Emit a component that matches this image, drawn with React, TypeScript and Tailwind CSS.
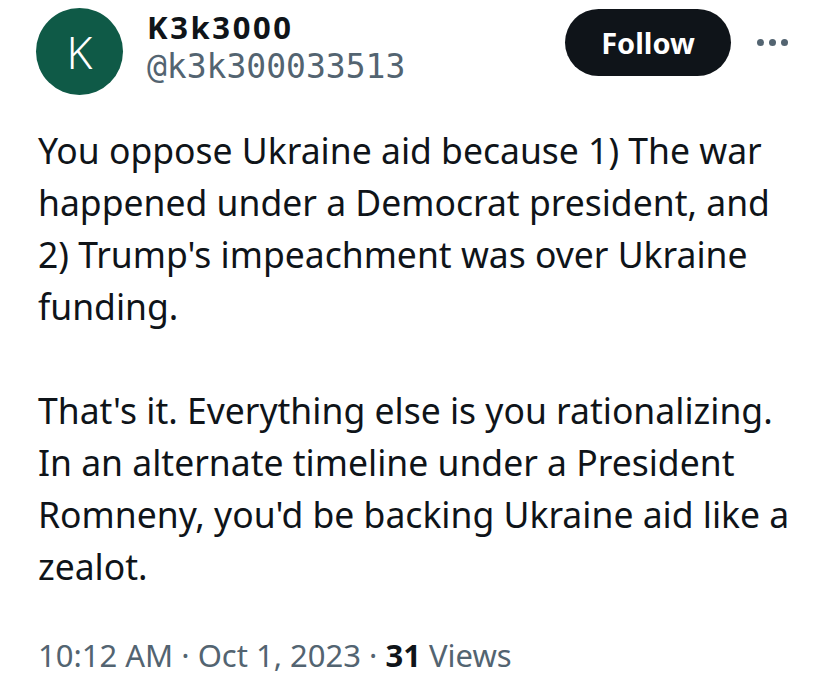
import React from "react";

export default function App() {
  return (
    <div
      className="w-[828px] h-[695px] bg-white text-[#0f1419] overflow-hidden"
      style={{ fontFamily: "'Noto Sans', Roboto, sans-serif" }}
    >
      <div className="flex items-center pl-[36px] pr-[40px] pt-[8px]">
        <div className="w-[87px] h-[87px] rounded-full bg-[#0f5a47] flex items-center justify-center text-white text-[44px] font-light leading-none">
          K
        </div>
        <div className="ml-[24px] flex flex-col -mt-[10px]">
          <span className="text-[31px] font-bold leading-[40px] tracking-[2.6px]">
            K3k3000
          </span>
          <span className="text-[33px] text-[#536471] leading-[40px] font-['DejaVu_Sans_Mono',monospace]">
            @k3k300033513
          </span>
        </div>
        <div className="ml-auto flex items-center -mt-[18px]">
          <button className="h-[67px] w-[166px] rounded-full bg-[#0f1419] text-white text-[29px] font-bold">
            Follow
          </button>
          <div className="ml-[26px] flex gap-[5px]">
            <span className="w-[7px] h-[7px] rounded-full bg-[#536471]" />
            <span className="w-[7px] h-[7px] rounded-full bg-[#536471]" />
            <span className="w-[7px] h-[7px] rounded-full bg-[#536471]" />
          </div>
        </div>
      </div>
      <div className="pl-[38px] pr-[24px] mt-[29px] text-[35.5px] leading-[52px] w-[828px]">
        <p>
          You oppose Ukraine aid because 1) The war happened under a Democrat president, and 2) Trump's impeachment was over Ukraine funding.
        </p>
        <p className="mt-[52px]">
          That's it. Everything else is you rationalizing. In an alternate timeline under a President Romneny, you'd be backing Ukraine aid like a zealot.
        </p>
      </div>
      <div className="pl-[38px] mt-[43px] text-[31px] text-[#536471] leading-[40px]">
        10:12 AM · Oct 1, 2023 · <span className="font-bold text-[#0f1419]">31</span> Views
      </div>
    </div>
  );
}
